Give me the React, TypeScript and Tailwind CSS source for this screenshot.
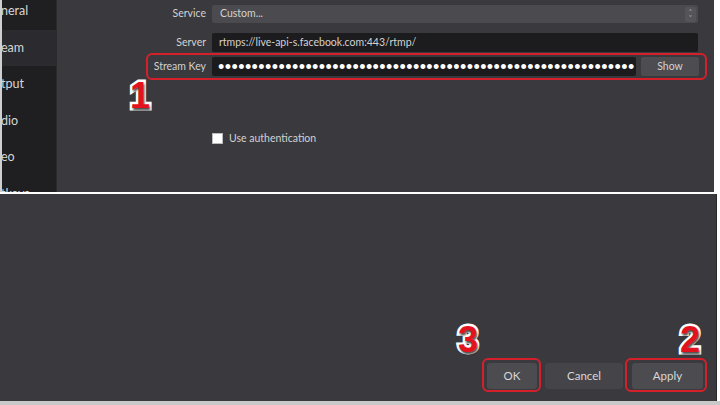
import React from "react";

const font = "font-['Lato','Open_Sans',sans-serif]";
const numeral =
  "absolute font-['Liberation_Sans',sans-serif] font-black text-[36px] leading-none text-[#e3121d] [-webkit-text-stroke:5px_white] [paint-order:stroke_fill] [text-shadow:1px_2px_2px_rgba(0,0,0,0.7)]";

function Sidebar() {
  const items = ["neral", "eam", "tput", "dio", "eo", "tkeys"];
  return (
    <div className="w-[55px] h-full bg-[#1f1e21] overflow-hidden flex flex-col border-r border-[#2a292c]">
      <div className="mt-[-7px] flex flex-col">
        {items.map((t, i) => (
          <div
            key={t}
            className={`h-[36.6px] flex items-center text-[12.5px] text-[#d6d6d6] -ml-[1px] ${
              i === 1 ? "bg-[#2b2a2e]" : ""
            }`}
          >
            {t}
          </div>
        ))}
      </div>
    </div>
  );
}

export default function App() {
  const dots = "•".repeat(62);
  return (
    <div className={`w-[720px] h-[405px] bg-white overflow-hidden relative ${font}`}>
      {/* top screenshot */}
      <div className="flex h-[192px] w-[714px] pl-[2px] bg-[#cfcfcf]">
        <Sidebar />
        <div className="flex-1 bg-[#3a393d] text-[10.5px] text-[#d2d2d2] flex flex-col">
          <div className="flex items-center mt-[5px] h-[18px]">
            <div className="w-[155px] text-right pr-[6px]">Service</div>
            <div className="w-[486px] h-full bg-[#4b4a4e] rounded-[2px] flex items-center pl-[8px] pr-[2px]">
              <span className="flex-1">Custom...</span>
              <div className="w-[11px] h-[15px] bg-[#555458] rounded-[2px] flex flex-col items-center justify-center text-[6px] leading-[6px] text-[#bdbdbd]">
                <span>˄</span>
                <span>˅</span>
              </div>
            </div>
          </div>
          <div className="flex items-center mt-[10px] h-[19px]">
            <div className="w-[155px] text-right pr-[6px]">Server</div>
            <div className="w-[486px] h-full bg-[#1c1b1e] rounded-[2px] flex items-center pl-[7px]">
              rtmps://live-api-s.facebook.com:443/rtmp/
            </div>
          </div>
          <div className="flex items-center mt-[5px] h-[19px]">
            <div className="w-[155px] text-right pr-[6px]">Stream Key</div>
            <div className="w-[424px] h-full bg-[#1b1a1d] rounded-[2px] flex items-center pl-[6px]">
              <span className="font-['Liberation_Sans',sans-serif] text-[18px] leading-none tracking-[0.42px] text-white whitespace-nowrap">
                {dots}
              </span>
            </div>
            <div className="ml-[5px] w-[58px] h-full bg-[#4d4c50] rounded-[2px] flex items-center justify-center">
              Show
            </div>
          </div>
          <div className="flex items-center mt-[55px] pl-[155px]">
            <div className="w-[11px] h-[11px] bg-white border border-[#bbbbbb]" />
            <span className="ml-[6px]">Use authentication</span>
          </div>
        </div>
      </div>
      {/* separator */}
      <div className="h-[2px] bg-white" />
      {/* bottom screenshot */}
      <div className="h-[207px] w-[717px] bg-[#3a393d] border-r border-[#2a292c] flex items-end justify-end pr-[13px] pb-[12px] text-[11.5px] text-[#d8d8d8]">
        <div className="w-[50px] h-[26px] bg-[#4c4b4f] rounded-[3px] flex items-center justify-center">OK</div>
        <div className="ml-[8px] w-[78px] h-[26px] bg-[#454448] rounded-[3px] flex items-center justify-center">Cancel</div>
        <div className="ml-[9px] w-[71px] h-[26px] bg-[#4c4b4f] rounded-[3px] flex items-center justify-center">Apply</div>
      </div>
      <div className="h-[4px] bg-[#c9c9c9]" />

      {/* annotations */}
      <div className="absolute left-[146px] top-[53px] w-[561px] h-[27px] border-[2px] border-[#d5202b] rounded-[6px]" />
      <div className="absolute left-[482px] top-[358px] w-[59px] h-[34px] border-[2px] border-[#d5202b] rounded-[6px]" />
      <div className="absolute left-[625px] top-[358px] w-[82px] h-[34px] border-[2px] border-[#d5202b] rounded-[6px]" />
      <div className={`${numeral} left-[130px] top-[78px]`}>1</div>
      <div className={`${numeral} left-[458px] top-[322px]`}>3</div>
      <div className={`${numeral} left-[680px] top-[322px]`}>2</div>
    </div>
  );
}
